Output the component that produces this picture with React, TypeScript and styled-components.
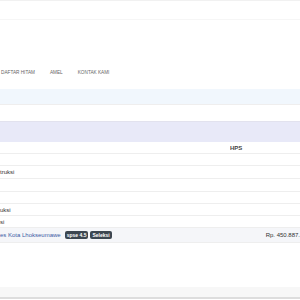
import { FC } from "react";
import styled, { createGlobalStyle } from "styled-components";

const GlobalStyle = createGlobalStyle`
    html, body {
        margin: 0;
        padding: 0;
        background: #ffffff;
    }

    body {
        font-family: "Liberation Sans", Arial, sans-serif;
        color: #333333;
        overflow: hidden;
    }
`;

const Page = styled.div`
    width: 300px;
    height: 300px;
    display: flex;
    flex-direction: column;
    overflow: hidden;
`;

const TopBar = styled.div`
    height: 20px;
    border-top: 1px solid #f1f1f1;
    border-bottom: 1px solid #f6f6f6;
    box-sizing: border-box;
`;

const NavArea = styled.div`
    height: 69px;
    display: flex;
    align-items: flex-end;
    padding-bottom: 14px;
    box-sizing: border-box;
`;

const NavList = styled.ul`
    display: flex;
    gap: 15px;
    margin: 0;
    padding: 0 0 0 1px;
    list-style: none;
`;

const NavItem = styled.li`
    font-size: 4.7px;
    color: #666666;
    text-transform: uppercase;
`;

const Breadcrumb = styled.div`
    height: 15px;
    background: #f1f7fd;
    border-bottom: 1px solid #efeeee;
`;

const Spacer = styled.div<{ h: number }>`
    height: ${({ h }) => h}px;
`;

const PanelHead = styled.div`
    height: 20px;
    background: #e8e9f8;
    border-top: 1px solid #e2e2ee;
`;

const Table = styled.div`
    display: flex;
    flex-direction: column;
`;

const Row = styled.div<{ h?: number; shade?: boolean }>`
    height: ${({ h }) => h ?? 12}px;
    display: grid;
    grid-template-columns: 1fr 70px;
    align-items: center;
    border-bottom: 1px solid #eeeeee;
    background: ${({ shade }) => (shade ? "#f5f6f9" : "#ffffff")};
    box-sizing: border-box;
    font-size: 6px;
`;

const Cell = styled.div<{ right?: boolean }>`
    display: flex;
    align-items: center;
    gap: 2px;
    white-space: nowrap;
    overflow: hidden;
    justify-content: ${({ right }) => (right ? "flex-end" : "flex-start")};
`;

const HeadCell = styled.div`
    font-weight: bold;
    font-size: 6px;
    color: #444444;
`;

const Link = styled.a`
    color: #3b5ba5;
    text-decoration: none;
    margin-right: 2px;
`;

const Badge = styled.span`
    background: #3c4650;
    color: #ffffff;
    font-weight: bold;
    font-size: 5px;
    border-radius: 2px;
    padding: 1px 2px;
`;

const FooterBand = styled.div`
    height: 10px;
    background: #f7f7f7;
    border-bottom: 2px solid #dddddd;
    margin-top: 44px;
`;

const App: FC = () => {
    return (
        <>
            <GlobalStyle />
            <Page>
                <TopBar />
                <NavArea>
                    <NavList>
                        <NavItem>Daftar Hitam</NavItem>
                        <NavItem>Amel</NavItem>
                        <NavItem>Kontak Kami</NavItem>
                    </NavList>
                </NavArea>
                <Breadcrumb />
                <Spacer h={16} />
                <PanelHead />
                <Table>
                    <Row>
                        <Cell />
                        <Cell>
                            <HeadCell>HPS</HeadCell>
                        </Cell>
                    </Row>
                    <Row />
                    <Row h={13}>
                        <Cell>truksi</Cell>
                    </Row>
                    <Row h={13} />
                    <Row />
                    <Row>
                        <Cell>uksi</Cell>
                    </Row>
                    <Row>
                        <Cell>si</Cell>
                    </Row>
                    <Row h={15} shade>
                        <Cell>
                            <Link href="#">es Kota Lhokseumawe</Link>
                            <Badge>spse 4.5</Badge>
                            <Badge>Seleksi</Badge>
                        </Cell>
                        <Cell right>Rp. 450.887.</Cell>
                    </Row>
                </Table>
                <FooterBand />
            </Page>
        </>
    );
};

export default App;
